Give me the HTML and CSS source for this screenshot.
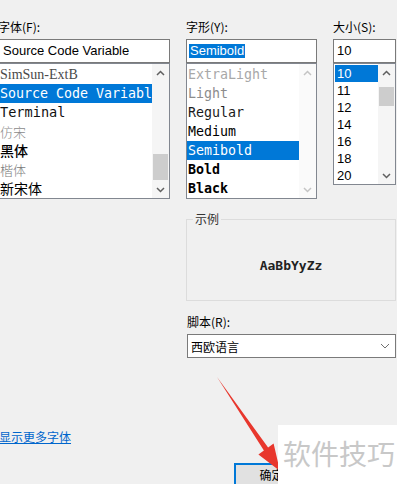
FILE: index.html
```html
<!DOCTYPE html>
<html lang="zh-CN">
<head>
<meta charset="utf-8">
<title>字体</title>
<link rel="stylesheet" href="styles.css">
</head>
<body>
<div class="dialog">
  <div class="grid top">
    <div class="col">
      <div class="lbl">字体(F):</div>
      <div class="input">Source Code Variable</div>
      <div class="list list-tall">
        <div class="items">
          <div class="row f-simsun">SimSun-ExtB</div>
          <div class="row f-mono on">Source Code Variable</div>
          <div class="row f-mono f-dark">Terminal</div>
          <div class="row f-fang">仿宋</div>
          <div class="row f-hei">黑体</div>
          <div class="row f-kai">楷体</div>
          <div class="row f-song">新宋体</div>
        </div>
        <div class="scroll">
          <div class="sbtn"><svg width="9" height="6" viewBox="0 0 9 6"><path d="M1 5 L4.5 1.5 L8 5" fill="none" stroke="#606060" stroke-width="1.5"/></svg></div>
          <div class="track"><div class="thumb thumb-fonts"></div></div>
          <div class="sbtn"><svg width="9" height="6" viewBox="0 0 9 6"><path d="M1 1 L4.5 4.5 L8 1" fill="none" stroke="#606060" stroke-width="1.5"/></svg></div>
        </div>
      </div>
    </div>
    <div class="col">
      <div class="lbl">字形(Y):</div>
      <div class="input"><span class="sel">Semibold</span></div>
      <div class="list list-tall styles">
        <div class="items">
          <div class="row s-xl">ExtraLight</div>
          <div class="row s-l">Light</div>
          <div class="row">Regular</div>
          <div class="row s-m">Medium</div>
          <div class="row on">Semibold</div>
          <div class="row s-b">Bold</div>
          <div class="row s-b">Black</div>
        </div>
        <div class="scroll scroll-off">
          <div class="sbtn"><svg width="9" height="6" viewBox="0 0 9 6"><path d="M1 5 L4.5 1.5 L8 5" fill="none" stroke="#c4c4c4" stroke-width="1.5"/></svg></div>
          <div class="track"></div>
          <div class="sbtn"><svg width="9" height="6" viewBox="0 0 9 6"><path d="M1 1 L4.5 4.5 L8 1" fill="none" stroke="#c4c4c4" stroke-width="1.5"/></svg></div>
        </div>
      </div>
    </div>
    <div class="col">
      <div class="lbl">大小(S):</div>
      <div class="input input-size">10</div>
      <div class="list list-short sizes">
        <div class="items">
          <div class="row on">10</div>
          <div class="row">11</div>
          <div class="row">12</div>
          <div class="row">14</div>
          <div class="row">16</div>
          <div class="row">18</div>
          <div class="row">20</div>
        </div>
        <div class="scroll">
          <div class="sbtn"><svg width="9" height="6" viewBox="0 0 9 6"><path d="M1 5 L4.5 1.5 L8 5" fill="none" stroke="#606060" stroke-width="1.5"/></svg></div>
          <div class="track"><div class="thumb thumb-sizes"></div></div>
          <div class="sbtn"><svg width="9" height="6" viewBox="0 0 9 6"><path d="M1 1 L4.5 4.5 L8 1" fill="none" stroke="#606060" stroke-width="1.5"/></svg></div>
        </div>
      </div>
    </div>
  </div>

  <div class="grid mid">
    <div class="right">
      <fieldset class="group">
        <legend>示例</legend>
        <div class="sample">AaBbYyZz</div>
      </fieldset>
      <div class="lbl lbl-script">脚本(R):</div>
      <div class="select">
        <span>西欧语言</span>
        <svg width="10" height="6" viewBox="0 0 10 6"><path d="M1 1 L5 5 L9 1" fill="none" stroke="#707070" stroke-width="1"/></svg>
      </div>
    </div>
  </div>

  <a class="more" href="#">显示更多字体</a>

  <div class="buttons">
    <button class="btn btn-ok">确定</button>
  </div>
</div>

<svg class="arrow" width="397" height="484" viewBox="0 0 397 484">
  <polygon points="217,377 268.1,447.6 273.6,443.6 280,471 258.4,454.4 263.9,450.4" fill="#e8372d"/>
</svg>

<div class="watermark">软件技巧</div>
</body>
</html>
```

FILE: styles.css
```css
* { box-sizing: border-box; }
html, body { margin: 0; padding: 0; }
body {
  width: 397px;
  height: 484px;
  overflow: hidden;
  position: relative;
  background: #f0f0f0;
  font-family: "Noto Sans CJK SC", sans-serif;
  font-size: 12px;
  color: #000;
}
.dialog { margin-left: -2px; width: 399px; }
.grid {
  display: grid;
  grid-template-columns: 172px 131px 63px;
  column-gap: 16px;
}
.top { padding-top: 19px; }
.lbl {
  height: 16px;
  line-height: 16px;
  margin-bottom: 4px;
  white-space: nowrap;
  font-size: 12px;
  color: #000;
}
.input {
  height: 24px;
  border: 1px solid #7a7a7a;
  background: #fff;
  font-family: "Liberation Sans", sans-serif;
  font-size: 13px;
  line-height: 22px;
  padding-left: 4px;
  white-space: nowrap;
  overflow: hidden;
}
.input .sel {
  display: inline-block;
  background: #0078d7;
  color: #fff;
  line-height: 14px;
  padding: 0 1px;
  margin-left: -2px;
}
.input-size { padding-left: 3px; }
.list {
  display: flex;
  border: 1px solid #828790;
  background: #fff;
  overflow: hidden;
}
.list-tall { height: 136px; }
.list-short { height: 122px; }
.items { flex: 1; min-width: 0; overflow: hidden; padding-top: 1px; }
.row {
  height: 19px;
  line-height: 19px;
  white-space: nowrap;
  overflow: hidden;
  padding-left: 1px;
}
.row.on { background: #0078d7; color: #fff; }

/* font list faces */
.f-simsun { font-family: "Liberation Serif", serif; font-size: 14px; color: #4a4a4a; }
.f-mono { font-family: "DejaVu Sans Mono", monospace; font-size: 13.3px; }
.f-dark { color: #111; font-size: 13.6px; }
.f-fang { font-family: "Noto Sans CJK SC", sans-serif; font-weight: 300; font-size: 13px; color: #8a8a8a; }
.f-hei { font-family: "Noto Sans CJK SC", sans-serif; font-weight: 500; font-size: 14px; color: #000; }
.f-kai { font-family: "Noto Sans CJK SC", sans-serif; font-weight: 300; font-size: 13px; color: #7a7a7a; }
.f-song { font-family: "Noto Sans CJK SC", sans-serif; font-size: 14px; color: #000; }

/* style list */
.styles .row { font-family: "DejaVu Sans Mono", monospace; font-size: 13.3px; color: #1a1a1a; }
.styles .row.on { color: #fff; }
.styles .s-xl { color: #a8a8a8; }
.styles .s-l { color: #8c8c8c; }
.styles .s-m { color: #000; }
.styles .s-b { font-weight: bold; color: #000; }

/* size list */
.sizes .items { padding: 1px 0 0 1px; }
.sizes .row {
  height: 17px;
  line-height: 17px;
  font-family: "Liberation Sans", sans-serif;
  font-size: 13px;
  padding-left: 2px;
}

/* scrollbars */
.scroll {
  width: 17px;
  flex: none;
  display: flex;
  flex-direction: column;
  background: #f5f5f5;
}
.scroll-off { background: #fafafa; }
.sbtn {
  height: 17px;
  flex: none;
  display: flex;
  align-items: center;
  justify-content: center;
}
.sbtn svg { display: block; }
.track { flex: 1; padding: 0 1px; }
.thumb { background: #cdcdcd; }
.thumb-fonts { margin-top: 73px; height: 26px; }
.thumb-sizes { margin-top: 6px; height: 19px; }

/* middle area */
.mid { margin-top: 13px; }
.right { grid-column: 2 / 4; }
.group {
  margin: 0;
  padding: 0;
  min-width: 0;
  border: 1px solid #dcdcdc;
}
.group legend {
  margin-left: 6px;
  padding: 0 2px;
  font-size: 12px;
  line-height: 14px;
  color: #333;
}
.sample {
  height: 74px;
  padding-top: 6px;
  line-height: 68px;
  text-align: center;
  font-family: "DejaVu Sans Mono", monospace;
  font-weight: bold;
  font-size: 13px;
  color: #222;
}
.lbl-script { margin-top: 13px; margin-left: 1px; }
.select {
  margin-left: 1px;
  width: 209px;
  height: 24px;
  border: 1px solid #7a7a7a;
  background: #fff;
  display: flex;
  align-items: center;
  justify-content: space-between;
  padding: 0 5px 0 3px;
  font-size: 12px;
}
.select svg { display: block; }

.more {
  display: inline-block;
  margin-top: 71px;
  margin-left: 1px;
  height: 16px;
  line-height: 16px;
  font-size: 12px;
  color: #0066cc;
  text-decoration: underline;
}

.buttons {
  margin-top: 18px;
  display: flex;
  padding-left: 236px;
}
.btn {
  width: 75px;
  height: 23px;
  border: 1px solid #adadad;
  background: #e1e1e1;
  font-family: "Noto Sans CJK SC", sans-serif;
  font-size: 12px;
  color: #000;
  padding: 0;
  line-height: 21px;
}
.btn-ok { border: 2px solid #0078d7; line-height: 19px; }

.arrow { position: absolute; left: 0; top: 0; pointer-events: none; }
.watermark {
  position: absolute;
  left: 278px;
  top: 425px;
  width: 119px;
  height: 59px;
  background: #fff;
  font-family: "Noto Sans CJK SC", sans-serif;
  font-size: 28px;
  line-height: 56px;
  padding-left: 5px;
  color: #c8c8c8;
  white-space: nowrap;
  overflow: hidden;
}
```
